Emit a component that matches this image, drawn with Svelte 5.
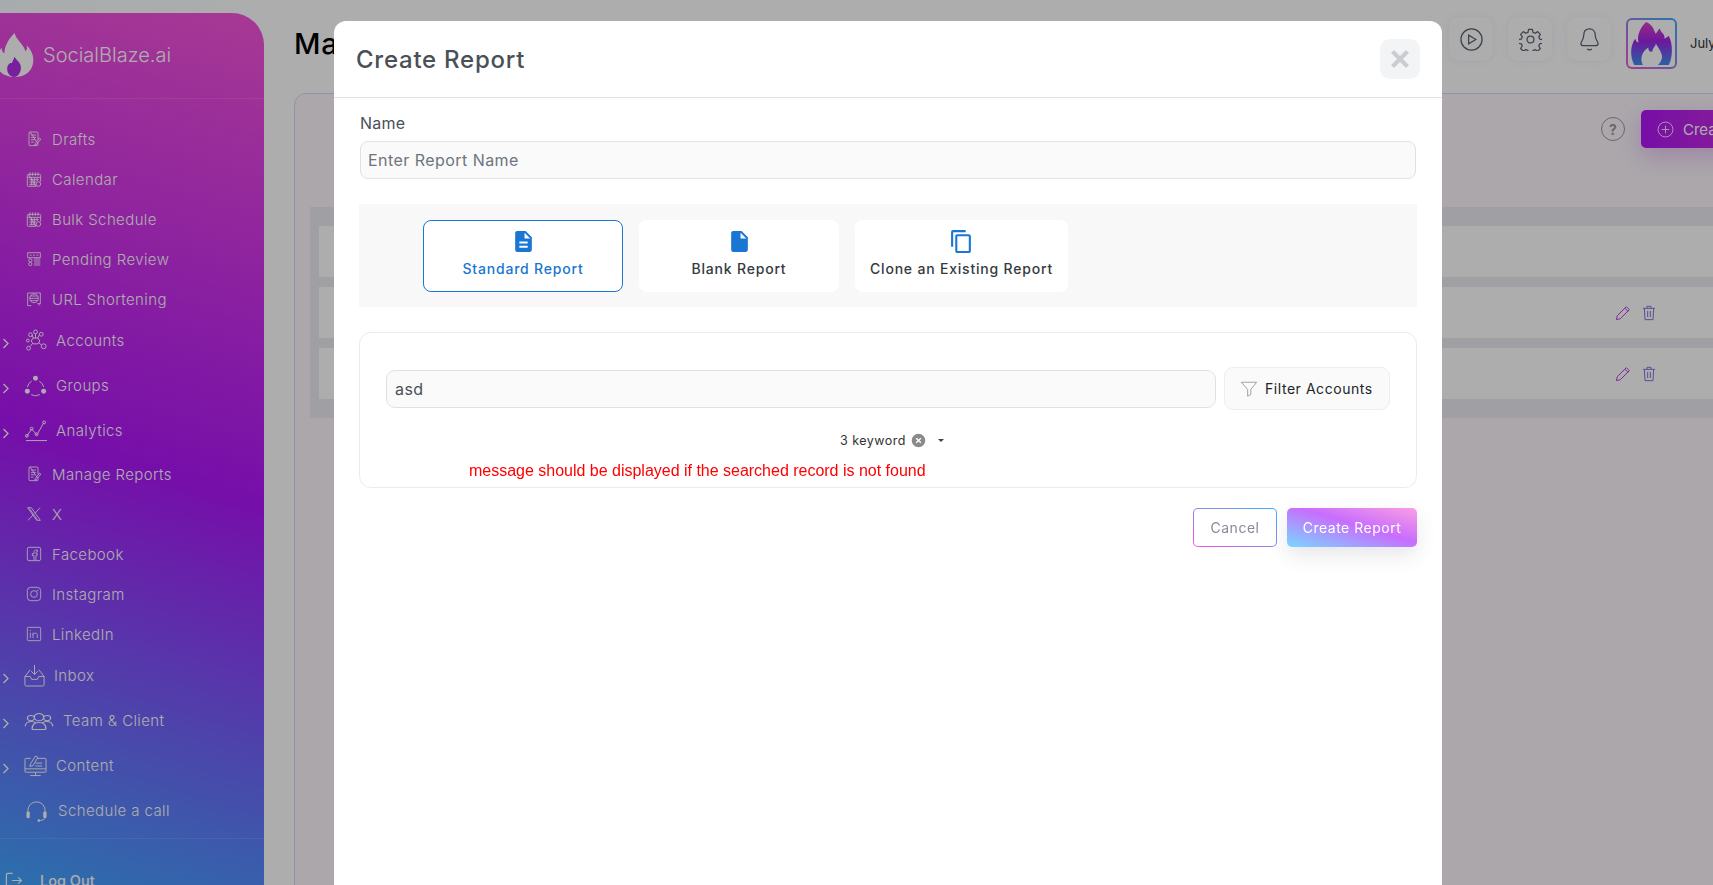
<script lang="ts">
	const dot = (x: number, y: number, r: number) =>
		`M${x - r} ${y}a${r} ${r} 0 1 0 ${2 * r} 0a${r} ${r} 0 1 0 ${-2 * r} 0Z`;

	const doc = "M6 1.500h10.500a1.500 1.500 0 0 1 1.500 1.500v10M18 19v1.500a1.500 1.500 0 0 1-1.500 1.500H6a1.500 1.500 0 0 1-1.500-1.500V3A1.500 1.500 0 0 1 6 1.500ZM7.500 6h7.500M7.500 9.500h7.500M7.500 13h6M7.500 16.500h4M20.500 10.500l-6.500 8-1 3 2.800-1.300 6.400-8Z";
	const cal = "M3.500 5h17A1.500 1.500 0 0 1 22 6.500V16M15 23H3.500A1.500 1.500 0 0 1 2 21.500V6.500A1.500 1.500 0 0 1 3.500 5ZM2 9.500h20M6 2v5M10 2v5M14 2v5M18 2v5M5 13h14M5 16.500h10M5 20h9M8.500 10v11.500M12.500 10v11.500M16.500 10v5" + dot(18.5, 19.5, 3.5);

	const icons: Record<string, string> = {
		doc,
		cal,
		pending: "M2.500 2.500h19v7.500h-19ZM5.500 6.200h3M10.500 6.200h3M15.500 6.200h3M12 12h9.500M12 15h9.500M12 18h9.500M12 21h9.500" + dot(6.5, 14, 2.5) + dot(6.5, 19.5, 2.5),
		url: "M2.500 3h19v16h-4M8 22H2.500V3M6 11h12M6.500 7.500h11M6.500 14.500h11" + dot(12, 11, 6.5) + "M21 22l-3.500-4",
		accounts: "M9.500 9.500h5l2 3-2 3h-5l-2-3ZM10 9.500L8 6M14.200 9.500l2-3.500M15.500 14.500l2.500 2M9 15L6.500 18" + dot(12, 3, 2) + dot(6.8, 6, 2) + dot(18, 5.500, 2) + dot(4, 12, 1.500) + dot(20.5, 18, 2.500) + dot(4.800, 20, 2) + "M12 5v4.500",
		groups: "M8 7.500a9 9 0 0 0-4.500 6M16 7.500a9 9 0 0 1 4.500 6M7.500 21.500a9 9 0 0 0 9 0",
		analytics: "M2 22.500h22M2.500 18.500l5.500-8 5.500 6 7-12.500" + dot(3, 17.5, 1.500) + dot(8, 10, 1.500) + dot(13, 16, 1.500) + dot(21, 3.500, 1.500),
		x: "M2.500 2.500h5.500l13.500 19h-5.500ZM21 2.500l-7.800 8.800M10.500 13.500L3 21.500M5 3.500l12 17",
		fb: "M4.500 2h15A2.500 2.500 0 0 1 22 4.500v15a2.500 2.500 0 0 1-2.500 2.500h-15A2.500 2.500 0 0 1 2 19.500v-15A2.500 2.500 0 0 1 4.500 2ZM12 21.500v-7H9.500v-3H12V9.500c0-2.500 1.500-3.500 3.500-3.500H17v3h-1.200c-.8 0-1 .5-1 1.200v1.300H17l-.5 3h-1.700v7",
		ig: "M7 2h10a5 5 0 0 1 5 5v10a5 5 0 0 1-5 5H7a5 5 0 0 1-5-5V7a5 5 0 0 1 5-5Z" + dot(12, 12, 5) + dot(17.5, 6.5, .6),
		li: "M3.500 2h17A1.500 1.500 0 0 1 22 3.500v17a1.500 1.500 0 0 1-1.500 1.500h-17A1.500 1.500 0 0 1 2 20.500v-17A1.500 1.500 0 0 1 3.500 2ZM6.500 10v8M6.500 6v1.500M10.500 18v-8M10.500 13c.5-2.500 6.500-4 6.500 1v4",
		inbox: "M12 1v10M8.500 7.500l3.500 3.500 3.500-3.500M7.500 6L2 13v8.500a1.500 1.500 0 0 0 1.500 1.500h17a1.500 1.500 0 0 0 1.500-1.500V13l-5.500-7M2 13h5.500l1.500 3h6l1.500-3H22",
		team: "M1 18c0-3 2-5 5-5 1.500 0 2.500.4 3.500 1.500M23 18c0-3-2-5-5-5-1.500 0-2.500.4-3.500 1.500M6.500 20.500c0-4 2-6.500 5.500-6.500s5.500 2.500 5.500 6.500c0 .5-.3 .8-.8 .8H7.300c-.5 0-.8-.3-.8-.8Z" + dot(12, 8.5, 3.8) + dot(5.5, 9.5, 2.800) + dot(18.5, 9.500, 2.800),
		content: "M7 4.500H2a1 1 0 0 0-1 1V18a1 1 0 0 0 1 1h20a1 1 0 0 0 1-1V5.500a1 1 0 0 0-1-1h-8M1 15.500h22M12 19v3.500M6.500 22.500h11M6 13l1-3 5-8 2.500 1.500-5 8.500ZM12 9.500h7M12 12.500h7",
		headset: "M3 14v-2a9 9 0 0 1 18 0v2M21 19c0 2-2 3-5 3.500"
	};

	const nav = [
		{ label: "Drafts", icon: "doc" },
		{ label: "Calendar", icon: "cal" },
		{ label: "Bulk Schedule", icon: "cal" },
		{ label: "Pending Review", icon: "pending" },
		{ label: "URL Shortening", icon: "url" },
		{ label: "Accounts", icon: "accounts", group: true, gap: 9 },
		{ label: "Groups", icon: "groups", group: true, gap: 9 },
		{ label: "Analytics", icon: "analytics", group: true, gap: 9 },
		{ label: "Manage Reports", icon: "doc" },
		{ label: "X", icon: "x" },
		{ label: "Facebook", icon: "fb" },
		{ label: "Instagram", icon: "ig" },
		{ label: "LinkedIn", icon: "li" },
		{ label: "Inbox", icon: "inbox", group: true, gap: 8 },
		{ label: "Team & Client", icon: "team", group: true, wide: true, gap: 9 },
		{ label: "Content", icon: "content", group: true, gap: 9 },
		{ label: "Schedule a call", icon: "headset", group: true, nochev: true, gap: 10 }
	];

	const flame = "M20 0C22 8 30 12 32 20C34 18 34 15 33 13C38 18 42 25 40 34C38 43 30 48 20 48C10 48 2 43 0 34C-1 26 3 20 6 16C6 19 7 21 9 22C9 14 14 6 20 0Z";
	const tabs = [
		{ label: "Standard Report", active: true, d: "M14 2H6c-1.100 0-1.990.9-1.990 2L4 20c0 1.100.89 2 1.990 2H18c1.100 0 2-.9 2-2V8l-6-6zm2 16H8v-2h8v2zm0-4H8v-2h8v2zm-3-5V3.500L18.500 9H13z" },
		{ label: "Blank Report", d: "M6 2c-1.100 0-1.990.9-1.990 2L4 20c0 1.100.89 2 1.990 2H18c1.100 0 2-.9 2-2V8l-6-6H6zm7 7V3.500L18.500 9H13z" },
		{ label: "Clone an Existing Report", d: "M16 1H4c-1.100 0-2 .9-2 2v14h2V3h12V1zm3 4H8c-1.100 0-2 .9-2 2v14c0 1.100.9 2 2 2h11c1.100 0 2-.9 2-2V7c0-1.100-.9-2-2-2zm0 16H8V7h11v14z" }
	];
</script>

<div class="shell">
	<aside class="sidebar">
		<div class="brand">
			<svg class="logo" viewBox="-1 0 42 48">
				<path d={flame} fill="#fff" />
				<path d="M20 26C22 30 27 32 27 38C27 44 23 48 20 48C15 48 12 44 12 39C12 35 15 32 17 33C18 31 19 29 20 26Z" fill="#b02fe8" />
			</svg>
			<span>SocialBlaze.ai</span>
		</div>
		<nav>
			{#each nav as item}
				<div class="item" class:group={item.group} style={item.gap ? `gap:${item.gap}px` : ""}>
					{#if item.group}
						<svg class="chev" class:ghost={item.nochev} viewBox="0 0 8 12"><path d="M1.500 1.500L6 6l-4.500 4.500" /></svg>
					{/if}
					<svg class="nav-icon" class:wide={item.wide} viewBox="0 0 24 24" preserveAspectRatio={item.wide ? "none" : undefined}>
						<path d={icons[item.icon]} />
						{#if item.icon === "groups"}
							<circle class="solid" cx="12" cy="4.500" r="2.600" />
							<circle class="solid" cx="3.500" cy="18" r="2.600" />
							<circle class="solid" cx="20.500" cy="18" r="2.600" />
						{/if}
						{#if item.icon === "headset"}
							<rect class="solid" x="1.500" y="13" width="3.500" height="7" rx="1.500" />
							<rect class="solid" x="19" y="13" width="3.500" height="7" rx="1.500" />
							<circle class="solid" cx="14.500" cy="22.500" r="1.400" />
						{/if}
					</svg>
					<span>{item.label}</span>
				</div>
			{/each}
		</nav>
		<div class="logout">
			<svg viewBox="0 0 24 24"><path d="M11 3H5a2 2 0 0 0-2 2v14a2 2 0 0 0 2 2h6M10 12h12M18 8l4 4-4 4" /></svg>
			<span>Log Out</span>
		</div>
	</aside>

	<main>
		<header>
			<h1>Manage Reports</h1>
			<button class="tool" aria-label="Tutorial">
				<svg viewBox="0 0 24 24"><circle cx="12" cy="12" r="11" /><path d="M9 7.500v9l7.500-4.500Z" /></svg>
			</button>
			<button class="tool" aria-label="Settings">
				<svg viewBox="0 0 24 24">
					<circle cx="12" cy="12" r="3.600" />
					<path d="M10 1.500h4l.6 3 2.300 1 2.600-1.700 2.800 2.800-1.700 2.600 1 2.300 3 .6v3.800l-3 .6-1 2.300 1.700 2.600-2.800 2.800-2.600-1.700-2.300 1-.6 3h-4l-.6-3-2.300-1-2.600 1.700-2.800-2.800 1.700-2.600-1-2.300-3-.6v-3.800l3-.6 1-2.300-1.700-2.600 2.800-2.800 2.600 1.700 2.300-1Z" stroke-linejoin="round" />
				</svg>
			</button>
			<button class="tool" aria-label="Notifications">
				<svg viewBox="0 0 24 24"><path d="M12 1c-4 0-6 3-6 6.500 0 5-3 6.500-3 9 0 1.500 1.500 2 3 2h12c1.500 0 3-.5 3-2 0-2.500-3-4-3-9C18 4 16 1 12 1ZM9.500 22c1.500 1 3.500 1 5 0" /></svg>
			</button>
			<div class="avatar">
				<svg viewBox="0 0 40 44" preserveAspectRatio="none">
					<defs>
						<linearGradient id="fl" x1="0" y1="0" x2="0" y2="1">
							<stop offset="0" stop-color="#e040c8" />
							<stop offset=".45" stop-color="#a024e8" />
							<stop offset="1" stop-color="#3a90f0" />
						</linearGradient>
					</defs>
					<path d="M15 0C22 3 22 9 24 12C26 9 27 7 28 7C28 11 33 12 32 17C34 16 35 15 36 14C40 22 40 36 36 44H4C0 36 0 24 5 17C5 20 7 21 8 21C6 14 10 5 15 0Z" fill="url(#fl)" />
					<path d="M12 44C9 38 11 30 17 26C17 30 19 31 21 30C21 26 24 25 24 22C26 26 28 28 29 32C31 36 29 41 26 44Z" fill="#fff" />
				</svg>
			</div>
			<span class="user">July Smith</span>
		</header>

		<section class="panel">
			<div class="toolbar">
				<span class="help">?</span>
				<button class="create">
					<svg viewBox="0 0 24 24"><circle cx="12" cy="12" r="10.500" /><path d="M12 6.500v11M6.500 12h11" /></svg>
					Create
				</button>
			</div>
			<div class="table">
				<div class="row"></div>
				{#each [0, 1] as r (r)}
					<div class="row">
						<svg class="act pencil" viewBox="0 0 24 24"><path d="M17 2.500l4.500 4.500L8 20.500l-6 1.500 1.500-6ZM15 5l4.500 4.500" /></svg>
						<svg class="act trash" viewBox="0 0 24 24"><path d="M3 5h18M9 5V2h6v3M5 5l1 17h12l1-17M10 9v9M14 9v9" /></svg>
					</div>
				{/each}
			</div>
		</section>
	</main>
</div>

<div class="overlay"></div>

<div class="modal">
	<div class="modal-head">
		<h2>Create Report</h2>
		<button class="close" aria-label="Close">
			<svg viewBox="0 0 20 20"><path d="M2.500 2.500l15 15M17.500 2.500l-15 15" /></svg>
		</button>
	</div>
	<div class="modal-body">
		<label class="field-label" for="report-name">Name</label>
		<input id="report-name" class="field name" placeholder="Enter Report Name" />

		<div class="types">
			{#each tabs as tab}
				<button class="type" class:active={tab.active}>
					<svg viewBox="0 0 24 24"><path d={tab.d} /></svg>
					<span>{tab.label}</span>
				</button>
			{/each}
		</div>

		<div class="search-card">
			<div class="search-row">
				<input class="field search" value="asd" />
				<button class="filter">
					<svg viewBox="0 0 20 20"><path d="M1.500 2.500h17l-6.500 8v5.500l-3.500 2v-7.500Z" /></svg>
					Filter Accounts
				</button>
			</div>
			<div class="keywords">
				<span>3 keyword</span>
				<svg class="clear" viewBox="0 0 16 16"><circle cx="8" cy="8" r="8" /><path d="M5.500 5.500l5 5M10.500 5.500l-5 5" /></svg>
				<i class="caret"></i>
			</div>
			<p class="error">message should be displayed if the searched record is not found</p>
		</div>

		<div class="actions">
			<button class="cancel">Cancel</button>
			<button class="submit">Create Report</button>
		</div>
	</div>
</div>

<style>
	:global(body) {
		overflow: hidden;
		font-family: Inter, "Open Sans", sans-serif;
	}
	.shell {
		display: flex;
		width: 1713px;
		height: 885px;
		overflow: hidden;
		background: linear-gradient(90deg, #f8fdff 0, #fff 280px);
	}
	.sidebar {
		flex: none;
		width: 264px;
		height: 905px;
		margin-top: 13px;
		border-radius: 0 32px 0 0;
		background: linear-gradient(197deg, #f755da 0%, #ae16fa 50%, #38b0ff 100%);
		color: #fff;
	}
	.brand {
		display: flex;
		align-items: center;
		gap: 9px;
		height: 86px;
		padding-bottom: 2px;
		box-sizing: border-box;
		border-bottom: 1px solid rgba(255, 255, 255, 0.12);
		font-size: 20px;
		font-weight: 300;
		letter-spacing: 0;
	}
	.logo {
		width: 39px;
		height: 44px;
		margin-left: -5px;
		flex: none;
	}
	nav {
		padding-top: 20px;
	}
	.item {
		display: flex;
		align-items: center;
		gap: 10px;
		height: 40px;
		padding-left: 26px;
		font-size: 15px;
		font-weight: 300;
		letter-spacing: 0.4px;
	}
	.item.group {
		height: 45px;
		padding-left: 2px;
		padding-bottom: 2px;
		box-sizing: border-box;
	}
	.chev {
		width: 8px;
		height: 13px;
		margin-top: 5px;
		margin-right: 5px;
		flex: none;
		fill: none;
		stroke: #fff;
		stroke-width: 1.300;
	}
	.chev.ghost {
		visibility: hidden;
	}
	.nav-icon {
		flex: none;
		width: 16px;
		height: 16px;
		fill: none;
		stroke: #fff;
		stroke-width: 1.300;
	}
	.group .nav-icon {
		width: 23px;
		height: 23px;
		stroke-width: 1;
	}
	.group .nav-icon.wide {
		width: 30px;
	}
	.solid {
		fill: #fff;
		stroke: none;
	}
	.logout {
		display: flex;
		align-items: center;
		gap: 17px;
		margin-top: 4px;
		padding: 32px 0 0 4px;
		border-top: 1px solid rgba(255, 255, 255, 0.12);
		font-size: 14.500px;
		font-weight: 500;
	}
	.logout svg {
		width: 19px;
		height: 19px;
		fill: none;
		stroke: #fff;
		stroke-width: 1.500;
	}
	main {
		flex: none;
		width: 1449px;
		overflow: hidden;
	}
	header {
		display: flex;
		align-items: flex-start;
		gap: 15px;
		height: 93px;
		padding-top: 17px;
		box-sizing: border-box;
	}
	h1 {
		flex: none;
		width: 1170px;
		margin: 0;
		padding-left: 30px;
		box-sizing: border-box;
		font-size: 29px;
		font-weight: 500;
		line-height: 54px;
		letter-spacing: 0.8px;
		color: #000;
	}
	.tool {
		flex: none;
		display: grid;
		place-items: center;
		width: 44px;
		height: 44px;
		padding: 0;
		border: 0;
		border-radius: 10px;
		background: #fff;
		box-shadow: 0 0 6px rgba(170, 195, 240, 0.22);
	}
	.tool svg {
		width: 23px;
		height: 23px;
		fill: none;
		stroke: #5a6472;
		stroke-width: 1.300;
	}
	.avatar {
		flex: none;
		display: grid;
		place-items: center;
		width: 51px;
		height: 51px;
		margin-top: 1px;
		box-sizing: border-box;
		border: 2px solid transparent;
		border-radius: 6px;
		background: linear-gradient(#fff, #fff) padding-box, linear-gradient(to top right, #f755da, #38b0ff) border-box;
	}
	.avatar svg {
		width: 43px;
		height: 43px;
	}
	.user {
		flex: none;
		margin-left: -2px;
		padding-top: 18px;
		font-size: 13px;
		color: #333;
	}
	.panel {
		width: 1496px;
		height: 800px;
		margin-left: 30px;
		box-sizing: border-box;
		border: 1px solid #d8dcf0;
		border-radius: 12px 0 0 0;
		background: #fcf7fc;
	}
	.toolbar {
		display: flex;
		justify-content: flex-end;
		align-items: center;
		gap: 16px;
		height: 38px;
		margin-top: 16px;
		padding-right: 15px;
	}
	.help {
		display: grid;
		place-items: center;
		width: 24px;
		height: 24px;
		box-sizing: border-box;
		border: 1.500px solid #999;
		border-radius: 50%;
		font-size: 14px;
		font-weight: 700;
		color: #999;
	}
	.create {
		display: flex;
		align-items: center;
		gap: 9px;
		width: 133px;
		height: 38px;
		padding: 0 0 0 16px;
		border: 0;
		border-radius: 5px;
		background: linear-gradient(90deg, #b016f5, #d035d8);
		box-shadow: 0 8px 24px rgba(170, 40, 220, 0.25);
		color: #fff;
		font: 400 15px Inter, sans-serif;
	}
	.create svg {
		width: 17px;
		height: 17px;
		fill: none;
		stroke: #fff;
		stroke-width: 1.200;
	}
	.table {
		margin: 59px 15px 0;
		padding: 19px 0 9px 9px;
		background: #eaeaf2;
	}
	.row {
		display: flex;
		align-items: center;
		gap: 10px;
		height: 51px;
		margin-bottom: 10px;
		padding-left: 1296px;
		background: #fff;
	}
	.act {
		width: 16px;
		height: 16px;
		fill: none;
		stroke-width: 1.500;
	}
	.pencil {
		stroke: #c03ee0;
	}
	.trash {
		stroke: #8a70e0;
	}
	.overlay {
		position: fixed;
		inset: 0;
		background: rgba(0, 0, 0, 0.32);
	}
	.modal {
		position: fixed;
		left: 334px;
		top: 21px;
		width: 1108px;
		height: 900px;
		border-radius: 12px 12px 0 0;
		background: #fff;
	}
	.modal-head {
		display: flex;
		justify-content: space-between;
		align-items: center;
		height: 77px;
		padding: 0 22px;
		box-sizing: border-box;
		border-bottom: 1px solid #dee2e6;
	}
	h2 {
		margin: 0;
		font-size: 24px;
		font-weight: 500;
		letter-spacing: 0.75px;
		color: #495057;
	}
	.close {
		display: grid;
		place-items: center;
		width: 40px;
		height: 40px;
		padding: 0;
		border: 0;
		border-radius: 10px;
		background: #f3f4f6;
	}
	.close svg {
		width: 20px;
		height: 20px;
		fill: none;
		stroke: #c9cdd2;
		stroke-width: 4;
	}
	.modal-body {
		padding: 14px 25px 0 25px;
	}
	.field-label {
		display: block;
		margin-bottom: 7px;
		padding-left: 1px;
		font-size: 16px;
		line-height: 22px;
		letter-spacing: 0.2px;
		color: #495057;
	}
	.field {
		display: block;
		width: 100%;
		height: 38px;
		padding: 0 7px;
		box-sizing: border-box;
		border: 1px solid #dee2e6;
		border-radius: 8px;
		background: #fafafa;
		font: 400 16px Inter, sans-serif;
		letter-spacing: 0.45px;
		color: #495057;
		outline: none;
	}
	.field.name {
		width: calc(100% - 2px);
		margin-left: 1px;
	}
	.field::placeholder {
		color: #6c757d;
		opacity: 1;
	}
	.types {
		display: flex;
		gap: 16px;
		height: 103px;
		margin-top: 25px;
		padding: 16px 0 0 64px;
		box-sizing: border-box;
		background: #f8f8f8;
	}
	.type {
		display: flex;
		flex-direction: column;
		align-items: center;
		width: 200px;
		height: 72px;
		padding: 8px 0 0;
		box-sizing: border-box;
		border: 1px solid transparent;
		border-radius: 8px;
		background: #fff;
		font: 500 14px Inter, sans-serif;
		letter-spacing: 0.8px;
		color: #343a40;
	}
	.type:last-child {
		width: 213px;
	}
	.type svg {
		width: 25px;
		height: 25px;
		fill: #1976d2;
	}
	.type span {
		margin-top: 5px;
		line-height: 20px;
	}
	.type.active {
		border-color: #1976d2;
		color: #1976d2;
	}
	.search-card {
		height: 156px;
		margin-top: 25px;
		padding: 34px 26px 0;
		box-sizing: border-box;
		border: 1px solid #e9ecef;
		border-radius: 12px;
	}
	.search-row {
		display: flex;
		align-items: center;
		gap: 8px;
	}
	.search {
		flex: 1;
		height: 38px;
		padding: 0 8px;
		border-radius: 9px;
	}
	.filter {
		display: flex;
		align-items: center;
		gap: 7px;
		width: 166px;
		height: 43px;
		padding: 0 0 0 15px;
		flex: none;
		box-sizing: border-box;
		border: 1px solid #eceef0;
		border-radius: 9px;
		background: #fafafa;
		font: 400 14px Inter, sans-serif;
		letter-spacing: 0.55px;
		color: #212529;
	}
	.filter svg {
		width: 18px;
		height: 18px;
		fill: none;
		stroke: #999;
		stroke-width: 1;
	}
	.keywords {
		display: flex;
		align-items: center;
		justify-content: center;
		gap: 5px;
		height: 16px;
		margin-top: 22px;
		padding-left: 8px;
		font-size: 12.500px;
		letter-spacing: 0.5px;
		color: #333;
	}
	.clear {
		width: 15px;
		height: 15px;
		fill: #8a8a8a;
		stroke: #fff;
		stroke-width: 1.500;
	}
	.caret {
		width: 0;
		height: 0;
		margin-left: 7px;
		border: 3px solid transparent;
		border-top-color: #444;
		border-bottom: 0;
	}
	.error {
		margin: 12px 0 0 83px;
		font: 16px/22px "Liberation Sans", Arial, sans-serif;
		letter-spacing: -0.01px;
		color: #f00;
	}
	.actions {
		display: flex;
		justify-content: flex-end;
		gap: 10px;
		margin-top: 20px;
	}
	.actions button {
		height: 39px;
		padding: 0;
		font: 400 14px Inter, sans-serif;
		letter-spacing: 0.5px;
		border-radius: 5px;
	}
	.cancel {
		width: 84px;
		border: 1px solid transparent;
		background: linear-gradient(#fff, #fff) padding-box, linear-gradient(to top right, #f755da, #38b0ff) border-box;
		color: #878a99;
	}
	.submit {
		width: 130px;
		border: 0;
		background: linear-gradient(to top right, #80ceff 5%, #c86dfd 55%, #fb9ee4 100%);
		box-shadow: 0 8px 20px rgba(60, 60, 90, 0.12);
		color: #fff;
	}
</style>
